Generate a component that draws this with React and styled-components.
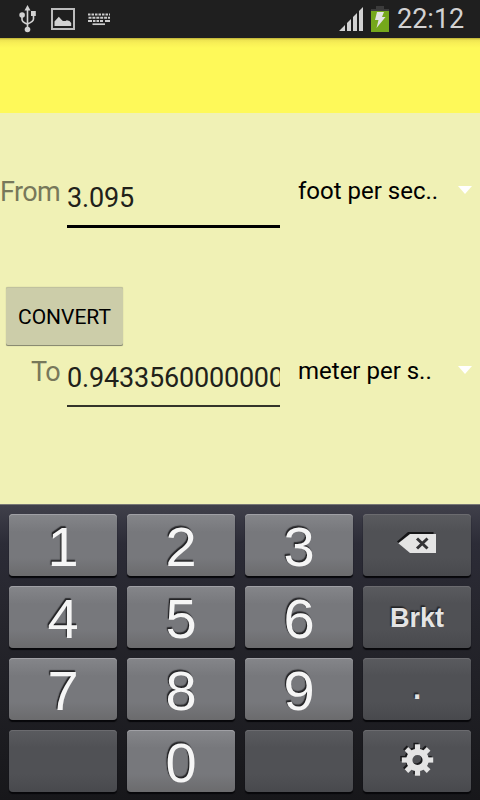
import React, {useState} from 'react'
import styled, {createGlobalStyle} from 'styled-components'

const keys = [
  '1', '2', '3', 'delete',
  '4', '5', '6', 'Brkt',
  '7', '8', '9', '.',
  'blank1', '0', 'blank2', 'settings',
]

function UsbIcon() {
  return (
    <svg width="18" height="28" viewBox="0 0 18 28" fill="none" stroke="#d2d2d2" strokeWidth="1.6">
      <path d="M8.5 4V24M3 10V14.5Q3 17 8.5 19.3M14.5 9V14Q14.5 16.5 8.5 19" />
      <path d="M8.5 0L11.5 5.6H5.5Z" fill="#d2d2d2" stroke="none" />
      <circle cx="3.1" cy="10" r="2.8" fill="#d2d2d2" stroke="none" />
      <path d="M12 6H16.8V11H12Z" fill="#d2d2d2" stroke="none" />
      <circle cx="8.5" cy="24.5" r="2.8" fill="#d2d2d2" stroke="none" />
    </svg>
  )
}

function PictureIcon() {
  return (
    <svg width="24" height="22" viewBox="0 0 24 22">
      <path d="M1 1H23V21H1Z" fill="none" stroke="#bcbcbc" strokeWidth="2" />
      <path d="M3.5 18V13.5L7.8 8.7L11.5 12.8Q14 13.6 15.8 12.2Q19 12.3 20.2 15V18Z" fill="#d2d2d2" />
    </svg>
  )
}

function KeyboardIcon() {
  return (
    <svg width="22" height="13" viewBox="0 0 22 13" stroke="#cccccc" strokeWidth="2">
      <path d="M0 1.6H22" strokeDasharray="2.5 1" />
      <path d="M.5 4.8H22" strokeDasharray="3 .9" />
      <path d="M0 8H4M5 8H7.5M8.5 8H11M12 8H15M17 8H22" />
      <path d="M4.5 11.2H17" strokeWidth="1.7" />
    </svg>
  )
}

function SignalIcon() {
  return (
    <svg width="25" height="25" viewBox="0 0 25 25" fill="#d2d2d2">
      <path d="M0 24L6 18V24ZM8 16L12 12V24H8ZM14 10L18 6V24H14ZM20 4L24 0V24H20Z" />
    </svg>
  )
}

function BatteryIcon() {
  return (
    <svg width="18" height="26" viewBox="0 0 18 26">
      <path d="M5 0H13V3H18V5H0V3H5Z" fill="#3c3c3c" />
      <path d="M0 5H18V26H0Z" fill="#75a81b" />
      <path d="M6 6H13L11 11H14.5L5.5 22L7.5 14H4Z" fill="#e2e2e2" />
    </svg>
  )
}

function DeleteIcon() {
  return (
    <svg width="40" height="22" viewBox="0 0 40 22">
      <path d="M0 9.5L11 0H36.5V19H11Z" fill="#151517" />
      <path d="M1.3 11.3L13 2H39V21H13Z" fill="#e4e4e4" />
      <path d="M20 6.5L30.5 16.5M30.5 6.5L20 16.5" stroke="#333336" strokeWidth="3" />
    </svg>
  )
}

const teeth = [0, 45, 90, 135, 180, 225, 270, 315]

function Gear({color}) {
  return (
    <g fill={color}>
      {teeth.map((deg) => (
        <path key={deg} d="M-2.6 -15.7H2.6V-9H-2.6Z" transform={`rotate(${deg})`} />
      ))}
      <circle r="8.2" fill="none" stroke={color} strokeWidth="6.2" />
    </g>
  )
}

function GearIcon() {
  return (
    <svg width="36" height="36" viewBox="-18.5 -18 36 36">
      <g transform="translate(-1.5 -1.5)"><Gear color="#19191b" /></g>
      <Gear color="#e4e4e4" />
    </svg>
  )
}

function UnitPicker({children}) {
  return (
    <Unit>
      <span>{children}</span>
      <svg width="14" height="8" viewBox="0 0 14 8"><path d="M0 0H14L7 8Z" fill="#fff" /></svg>
    </Unit>
  )
}

function App() {
  const [from, setFrom] = useState('3.095')
  const [to, setTo] = useState('0.943356000000000')

  const press = (key) => {
    if (key === 'delete') setFrom(from.slice(0, -1))
    else if (/^[0-9.]$/.test(key)) setFrom(from + key)
  }

  return (
    <Screen>
      <GlobalStyle />
      <StatusBar>
        <Notifications>
          <UsbIcon />
          <PictureIcon />
          <KeyboardIcon />
        </Notifications>
        <SystemIcons>
          <SignalIcon />
          <BatteryIcon />
          <Clock>22:12</Clock>
        </SystemIcons>
      </StatusBar>
      <TitleBar />
      <Content>
        <Row>
          <Label>From</Label>
          <Field $focused>{from}</Field>
          <UnitPicker>foot per sec..</UnitPicker>
        </Row>
        <Convert onClick={() => setTo((Number(from) * 0.3048).toFixed(15))}>CONVERT</Convert>
        <Row>
          <Label>To</Label>
          {/* 14 characters fill the field, the last one is clipped */}
          <Field>{to.slice(0, 15)}</Field>
          <UnitPicker>meter per s..</UnitPicker>
        </Row>
      </Content>
      <Keypad>
        {keys.map((key) => {
          const digit = /^[0-9]$/.test(key)
          return (
            <Key key={key} $digit={digit} onClick={() => press(key)}>
              {digit && key}
              {key === 'delete' && <Lift $by={4}><DeleteIcon /></Lift>}
              {key === 'settings' && <Lift $by={3}><GearIcon /></Lift>}
              {key === 'Brkt' && <KeyText>Brkt</KeyText>}
              {key === '.' && <Point>.</Point>}
            </Key>
          )
        })}
      </Keypad>
    </Screen>
  )
}

export default App;

const GlobalStyle = createGlobalStyle`
  *{
    box-sizing:border-box;
  }
  body{
    margin:0;
  }
  svg{
    display:block;
    flex-shrink:0;
  }
`
const Screen = styled.div`
  width:480px;
  height:800px;
  display:flex;
  flex-direction:column;
  overflow:hidden;
  background:#f0f1b5;
  font-family:Roboto, sans-serif;
`
const StatusBar = styled.div`
  height:38px;
  flex-shrink:0;
  display:flex;
  justify-content:space-between;
  background:#1f1f1f;
  padding:0 16px 0 19px;
`
const Notifications = styled.div`
  display:flex;
  align-items:center;
  gap:13px;
  svg:first-child{
    margin-right:1px;
  }
`
const SystemIcons = styled.div`
  display:flex;
  align-items:center;
  svg:first-child{
    margin:1px 7px 0 0;
  }
`
const Clock = styled.span`
  width:67px;
  margin-left:8px;
  color:#d2d2d2;
  font-size:27px;
  line-height:38px;
  white-space:nowrap;
`
const TitleBar = styled.div`
  height:75px;
  flex-shrink:0;
  background:linear-gradient(#b9ad35 0, #eee451 2px, #f8ef56 5px, #fef959 10px);
`
const Content = styled.div`
  height:391px;
  flex-shrink:0;
  padding-top:54px;
`
const Row = styled.div`
  height:61px;
  display:flex;
  align-items:flex-start;
`
const Label = styled.div`
  width:67px;
  padding:9px 7px 0 0;
  color:#77785a;
  font-size:27px;
  letter-spacing:-.6px;
  line-height:32px;
  text-align:right;
  white-space:nowrap;
`
const Field = styled.div`
  width:213px;
  height:${props=>props.$focused ? '61px':'60px'};
  padding-top:15px;
  border-bottom:${props=>props.$focused ? '3px solid #000':'2px solid #34342a'};
  color:#21211a;
  font-size:27px;
  letter-spacing:-.18px;
  line-height:32px;
  white-space:nowrap;
  overflow:hidden;
`
const Unit = styled.div`
  flex:1;
  display:flex;
  align-items:center;
  justify-content:space-between;
  height:28px;
  margin:10px 8px 0 18px;
  color:#000;
  font-size:24px;
  line-height:28px;
  white-space:nowrap;
  svg{
    margin-bottom:2px;
  }
`
const Convert = styled.button`
  display:block;
  width:117px;
  height:59px;
  margin:59px 0 1px 6px;
  padding:0;
  border:0;
  border-radius:2px;
  background:#cccda9;
  box-shadow:inset 0 1px 0 #c0c19f, inset 0 -1px 0 #8a8b72, 0 0 1px #a5a67d;
  color:#000;
  font-family:inherit;
  font-size:21px;
`
const Keypad = styled.div`
  height:296px;
  flex-shrink:0;
  display:grid;
  grid-template-columns:repeat(4, 108px);
  grid-auto-rows:62px;
  gap:10px;
  padding:9px 9px 0;
  border-top:1px solid #777775;
  background:linear-gradient(#40404a 0, #2c2c37 38px, #25252c 120px, #17171a 296px);
`
const Key = styled.button`
  display:flex;
  align-items:center;
  justify-content:center;
  padding:${props=>props.$digit ? '4px 0 0':'0'};
  border:0;
  border-radius:4px;
  background:${props=>props.$digit
    ? 'linear-gradient(#85868a 0, #77787c 18px, #77787c 44px, #6b6b6d 62px)'
    : 'linear-gradient(#5a5b5f 0, #505155 18px, #505155 44px, #48494d 62px)'};
  box-shadow:inset 0 1px 0 ${props=>props.$digit ? '#a0a0a5':'#6b6b6f'}, 0 2px 1px #07070a;
  color:#f5f5f5;
  font-family:"Liberation Sans", sans-serif;
  font-size:56px;
  line-height:58px;
  text-shadow:-1px -1px 1px #222224, -1px -2px 1px #333336;
`
const Lift = styled.span`
  padding-bottom:${props=>props.$by}px;
`
const KeyText = styled.span`
  padding-top:2px;
  color:#e4e4e4;
  font-size:27px;
  font-weight:bold;
  line-height:60px;
`
const Point = styled.span`
  padding-bottom:9px;
  color:#e4e4e4;
  font-size:42px;
  line-height:50px;
`
